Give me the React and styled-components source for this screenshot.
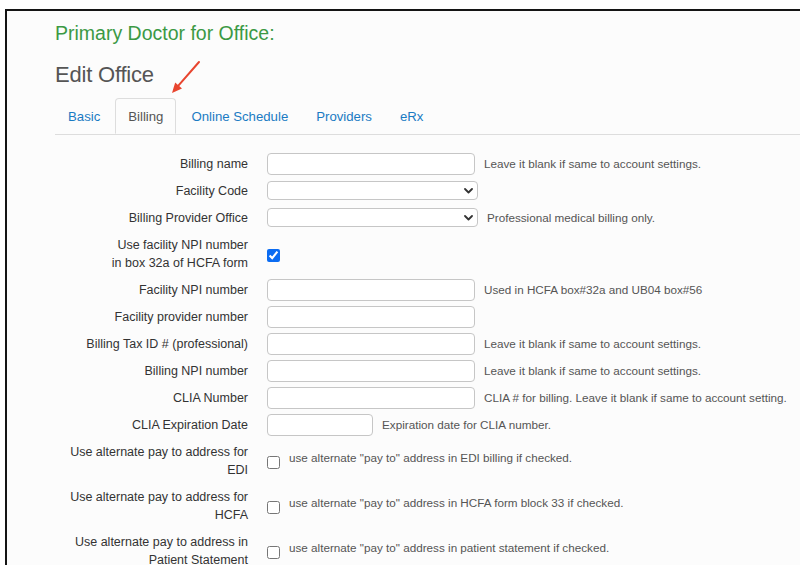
import styled, { createGlobalStyle } from "styled-components";

const GlobalStyle = createGlobalStyle`
  html, body {
    margin: 0;
    background: #ffffff;
  }
  body {
    font-family: "Liberation Sans", Arial, Helvetica, sans-serif;
    color: #333;
  }
`;

const tabs = ["Basic", "Billing", "Online Schedule", "Providers", "eRx"];

const rows = [
  { label: "Billing name", kind: "input", help: "Leave it blank if same to account settings." },
  { label: "Facility Code", kind: "select" },
  { label: "Billing Provider Office", kind: "select", help: "Professional medical billing only." },
  { label: ["Use facility NPI number", "in box 32a of HCFA form"], kind: "check", checked: true },
  { label: "Facility NPI number", kind: "input", help: "Used in HCFA box#32a and UB04 box#56" },
  { label: "Facility provider number", kind: "input" },
  { label: "Billing Tax ID # (professional)", kind: "input", help: "Leave it blank if same to account settings." },
  { label: "Billing NPI number", kind: "input", help: "Leave it blank if same to account settings." },
  { label: "CLIA Number", kind: "input", help: "CLIA # for billing. Leave it blank if same to account setting." },
  { label: "CLIA Expiration Date", kind: "input", small: true, help: "Expiration date for CLIA number." },
  { label: "Use alternate pay to address for EDI", kind: "check", help: 'use alternate "pay to" address in EDI billing if checked.' },
  { label: "Use alternate pay to address for HCFA", kind: "check", help: 'use alternate "pay to" address in HCFA form block 33 if checked.' },
  { label: "Use alternate pay to address in Patient Statement", kind: "check", help: 'use alternate "pay to" address in patient statement if checked.' },
];

const Chevron = () => (
  <ChevronIcon width="9" height="6" viewBox="0 0 9 6">
    <path d="M1 1l3.5 3.5L8 1" fill="none" stroke="#333" strokeWidth="1.8" strokeLinecap="round" strokeLinejoin="round" />
  </ChevronIcon>
);

const Arrow = () => (
  <ArrowMark width="45" height="40" viewBox="0 0 45 40">
    <line x1="39" y1="4" x2="18.6" y2="27.4" stroke="#e8452f" strokeWidth="2" strokeLinecap="round" />
    <polygon points="12,35 22,30.4 15.2,24.5" fill="#e8452f" />
  </ArrowMark>
);

const renderField = (row) => {
  if (row.kind === "select") {
    return (
      <SelectWrap>
        <Select defaultValue="">
          <option value=""></option>
        </Select>
        <Chevron />
      </SelectWrap>
    );
  }
  if (row.kind === "check") {
    return <Check type="checkbox" defaultChecked={row.checked} />;
  }
  return <TextInput type="text" $small={row.small} />;
};

const App = () => {
  return (
    <>
      <GlobalStyle />
      <Frame>
        <Arrow />
        <Heading>Primary Doctor for Office:</Heading>
        <Title>Edit Office</Title>
        <TabBar>
          {tabs.map((t) => (
            <Tab key={t} $active={t === "Billing"}>
              {t}
            </Tab>
          ))}
        </TabBar>
        <Form>
          {rows.map((row, i) => (
            <Row key={i}>
              <Label>
                {Array.isArray(row.label)
                  ? row.label.map((l, j) => (
                      <span key={j}>
                        {l}
                        {j === 0 && <br />}
                      </span>
                    ))
                  : row.label}
              </Label>
              <Field>
                {renderField(row)}
                {row.help && <Help $check={row.kind === "check"}>{row.help}</Help>}
              </Field>
            </Row>
          ))}
        </Form>
      </Frame>
    </>
  );
};

const Frame = styled.div`
  position: relative;
  margin: 9px 0 0 5px;
  height: 560px;
  border-top: 2px solid #141414;
  border-left: 2px solid #141414;
  background: #fcfcfc;
  padding: 11px 0 0 48px;
  overflow: hidden;
`;

const ArrowMark = styled.svg`
  position: absolute;
  left: 153px;
  top: 47px;
`;

const Heading = styled.h2`
  margin: 0;
  font-size: 19.5px;
  line-height: 23px;
  font-weight: 400;
  color: #3b9944;
`;

const Title = styled.h1`
  margin: 17px 0 0;
  font-size: 22px;
  line-height: 26px;
  font-weight: 400;
  color: #555;
  letter-spacing: -0.2px;
`;

const TabBar = styled.nav`
  display: flex;
  margin-top: 10px;
  border-bottom: 1px solid #dddddd;
  height: 36px;
`;

const Tab = styled.a`
  display: block;
  margin-right: 2px;
  margin-bottom: -1px;
  padding: 0 12px;
  height: 36px;
  line-height: 36px;
  font-size: 13.2px;
  box-sizing: border-box;
  border: 1px solid ${(p) => (p.$active ? "#dddddd" : "transparent")};
  border-bottom-color: ${(p) => (p.$active ? "#fcfcfc" : "transparent")};
  border-radius: 4px 4px 0 0;
  background: ${(p) => (p.$active ? "#fcfcfc" : "transparent")};
  color: ${(p) => (p.$active ? "#555" : "#1a7bc3")};
  cursor: pointer;
`;

const Form = styled.div`
  margin-top: 15px;
  display: flex;
  flex-direction: column;
`;

const Row = styled.div`
  display: grid;
  grid-template-columns: 193px 1fr;
  column-gap: 19px;
  align-items: center;
  min-height: 27px;
`;

const Label = styled.div`
  text-align: right;
  font-size: 12.5px;
  line-height: 18px;
  padding: 4.5px 0;
  color: #333;
`;

const Field = styled.div`
  display: flex;
  align-items: center;
`;

const TextInput = styled.input`
  box-sizing: border-box;
  width: ${(p) => (p.$small ? "106px" : "208px")};
  height: 22px;
  margin: 0;
  border: 1px solid #c6c6c6;
  border-radius: 4px;
  background: #fff;
  padding: 0 6px;
  font: inherit;
  font-size: 12px;
`;

const SelectWrap = styled.span`
  position: relative;
  display: inline-flex;
`;

const Select = styled.select`
  appearance: none;
  box-sizing: border-box;
  width: 211px;
  height: 19px;
  margin: 0;
  border: 1px solid #c6c6c6;
  border-radius: 4px;
  background: #fff;
  font: inherit;
  font-size: 12px;
  padding: 0 20px 0 6px;
`;

const ChevronIcon = styled.svg`
  position: absolute;
  right: 5px;
  top: 7px;
  pointer-events: none;
`;

const Check = styled.input`
  width: 13px;
  height: 13px;
  margin: 3px 0 0;
  accent-color: #0b6cf2;
`;

const Help = styled.span`
  margin-left: 9px;
  margin-bottom: ${(p) => (p.$check ? "6px" : "0")};
  font-size: 11.7px;
  color: #555;
  white-space: nowrap;
`;

export default App;
